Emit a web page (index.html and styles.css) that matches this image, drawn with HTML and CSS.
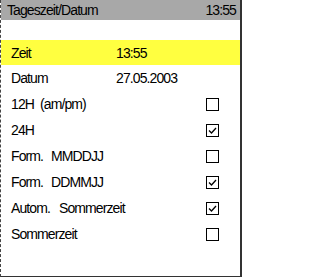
FILE: index.html
```html
<!DOCTYPE html>
<html>
<head>
<meta charset="utf-8">
<link rel="stylesheet" href="styles.css">
</head>
<body>
<div class="frame">
  <div class="header"><span>Tageszeit/Datum</span><span>13:55</span></div>
  <div class="list">
    <div class="row selected"><span class="label">Zeit</span><span class="value">13:55</span></div>
    <div class="row"><span class="label">Datum</span><span class="value">27.05.2003</span></div>
    <div class="row"><span class="label">12H<span class="part p-am">(am/pm)</span></span><span class="box"></span></div>
    <div class="row"><span class="label">24H</span><span class="box"><svg viewBox="0 0 13 13" width="13" height="13"><path d="M3 6.5 L5.5 9 L10 4" fill="none" stroke="#000" stroke-width="1.3"/></svg></span></div>
    <div class="row"><span class="label">Form.<span class="part p-form">MMDDJJ</span></span><span class="box"></span></div>
    <div class="row"><span class="label">Form.<span class="part p-form">DDMMJJ</span></span><span class="box"><svg viewBox="0 0 13 13" width="13" height="13"><path d="M3 6.5 L5.5 9 L10 4" fill="none" stroke="#000" stroke-width="1.3"/></svg></span></div>
    <div class="row"><span class="label">Autom.<span class="part p-auto">Sommerzeit</span></span><span class="box"><svg viewBox="0 0 13 13" width="13" height="13"><path d="M3 6.5 L5.5 9 L10 4" fill="none" stroke="#000" stroke-width="1.3"/></svg></span></div>
    <div class="row"><span class="label">Sommerzeit</span><span class="box"></span></div>
  </div>
</div>
</body>
</html>
```
FILE: styles.css
```css
html, body {
  margin: 0;
  padding: 0;
  background: #fff;
}
.frame {
  width: 242px;
  height: 277px;
  box-sizing: border-box;
  border-left: 1px dashed #444;
  border-right: 2px solid #333;
  border-bottom: 1px solid #333;
  font-family: "Liberation Sans", Arial, sans-serif;
  font-size: 14px;
  letter-spacing: -0.9px;
  color: #000;
  display: flex;
  flex-direction: column;
}
.header {
  height: 20px;
  background: #a8a8a8;
  display: flex;
  justify-content: space-between;
  align-items: center;
  padding: 0 4px 0 6px;
}
.list {
  margin-top: 19px;
  display: flex;
  flex-direction: column;
}
.row {
  height: 26px;
  display: flex;
  align-items: center;
  padding-left: 10px;
}
.row.selected {
  background: #ffff40;
  margin-top: 1px;
  height: 25px;
}
.label {
  width: 105px;
  white-space: nowrap;
}
.part {
  margin-left: 8px;
}
.part.p-am {
  margin-left: 6px;
}
.part.p-auto {
  margin-left: 9px;
}
.row .box {
  margin-left: auto;
  margin-right: 21px;
  width: 13px;
  height: 13px;
  box-sizing: border-box;
  border: 1px solid #000;
  position: relative;
}
.box svg {
  position: absolute;
  left: -1px;
  top: -1px;
}
```
